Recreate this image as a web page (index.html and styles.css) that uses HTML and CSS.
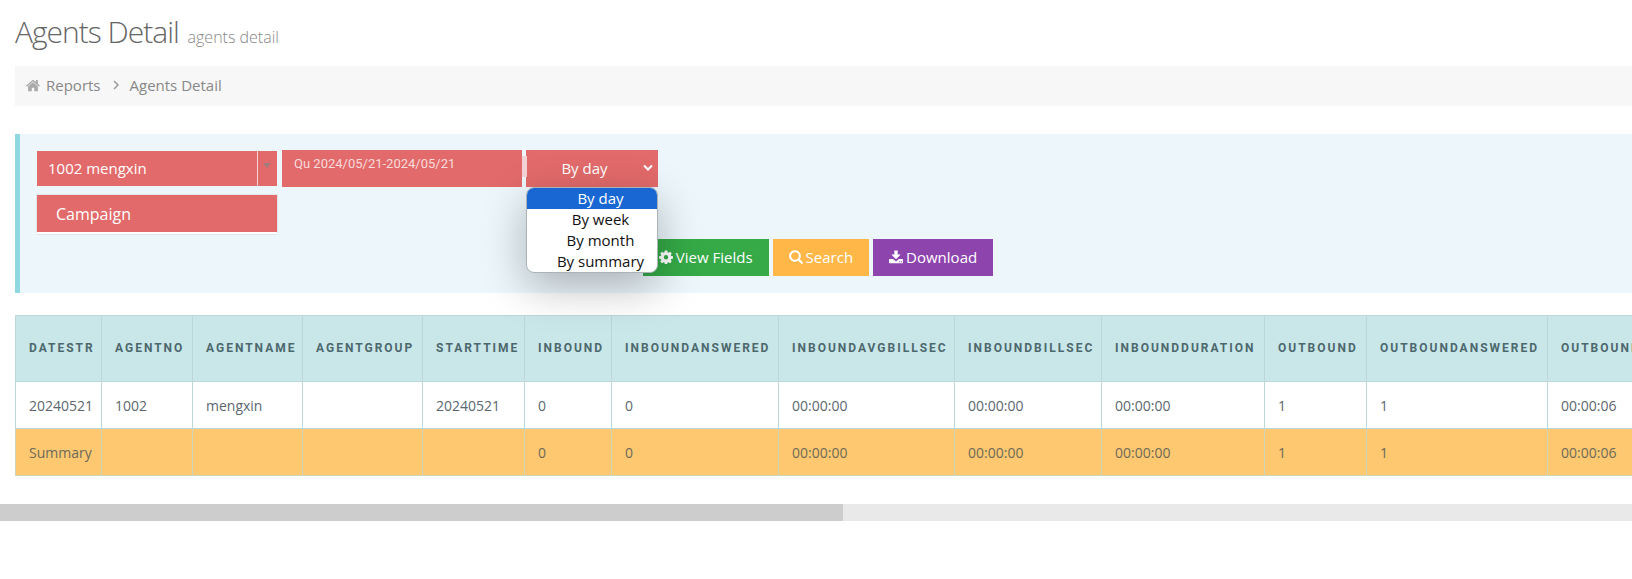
FILE: index.html
```html
<!DOCTYPE html>
<html lang="en">
<head>
<meta charset="utf-8">
<title>Agents Detail</title>
<link rel="stylesheet" href="styles.css">
</head>
<body>
<main class="page">
  <h1 class="page-title">Agents Detail <small>agents detail</small></h1>

  <nav class="breadcrumb" aria-label="Breadcrumb">
    <svg class="home" viewBox="0 0 16 14" aria-hidden="true"><path d="M8 3.2 2.4 7.9V13q0 .6.6.6h3.6V9.7h2.8v3.9H13q.6 0 .6-.6V7.9zM15.8 6.9 13.6 5V.9q0-.3-.3-.3h-1.7q-.3 0-.3.3v2.2L8.8 1Q8 .4 7.2 1L.2 6.900q-.2.2 0 .4l.6.7q.2.200.4 0L8 2.300l6.800 5.700q.2.200.4 0l.6-.7q.2-.2 0-.4z"/></svg>
    <a href="#">Reports</a>
    <svg class="angle" viewBox="0 0 6 10" aria-hidden="true"><path d="M1 1l4 4-4 4"/></svg>
    <a href="#">Agents Detail</a>
  </nav>

  <form class="filters">
    <div class="fields">
      <div class="agent">
        <select aria-label="Agent"><option>1002 mengxin</option></select>
        <span class="arrow"></span>
      </div>
      <div class="dates"><input type="text" aria-label="Date range" value="Qu 2024/05/21-2024/05/21"></div>
      <div class="period">
        <select aria-label="Period"><option>By day</option><option>By week</option><option>By month</option><option>By summary</option></select>
        <svg class="chevron" viewBox="0 0 10 7" aria-hidden="true"><path d="M1 1l4 4 4-4"/></svg>
        <ul class="menu" role="listbox" aria-label="Period options">
          <li role="option" aria-selected="true" class="active">By day</li>
          <li role="option" aria-selected="false">By week</li>
          <li role="option" aria-selected="false">By month</li>
          <li role="option" aria-selected="false">By summary</li>
        </ul>
      </div>
      <button type="button" class="campaign">Campaign</button>
    </div>
    <div class="actions">
      <button type="button" class="btn green"><svg viewBox="0 0 14 14" aria-hidden="true"><path fill-rule="evenodd" d="M5.800.5h2.400l.35 1.800 1 .4 1.500-1 1.700 1.700-1 1.500.4 1 1.800.35v2.400l-1.800.35-.4 1 1 1.500-1.700 1.700-1.500-1-1 .4-.35 1.400H5.800l-.35-1.400-1-.4-1.500 1-1.700-1.700 1-1.500-.4-1L.1 8.650v-2.400l1.750-.35.4-1-1-1.500 1.700-1.700 1.500 1 1-.4zM7 5.100a2.200 2.200 0 1 0 0 4.400 2.200 2.200 0 0 0 0-4.400z"/></svg>View Fields</button>
      <button type="button" class="btn orange"><svg viewBox="0 0 14 14" aria-hidden="true"><path fill-rule="evenodd" d="M6 .2a5.800 5.800 0 1 0 3.200 10.600l3 3q.5.4 1 0l.6-.6q.4-.5 0-1l-3-3A5.800 5.800 0 0 0 6 .2zM6 2.200a3.800 3.800 0 1 1 0 7.600 3.800 3.800 0 0 1 0-7.600z"/></svg>Search</button>
      <button type="button" class="btn purple"><svg viewBox="0 0 14 14" aria-hidden="true"><path fill-rule="evenodd" d="M5.300.5h3.400v4h3L7 9.300 2.300 4.500h3zM.7 9h3.400L7 11.600 9.900 9h3.400q.7 0 .7.700v2.800q0 .7-.7.700H.7q-.7 0-.7-.7V9.700Q0 9 .7 9zM9.900 11.200v1h1v-1zM11.900 11.200v1h1v-1z"/></svg>Download</button>
    </div>
  </form>

  <div class="table-wrap">
    <table>
      <colgroup>
        <col class="w86"><col class="w91"><col class="w110"><col class="w120"><col class="w102"><col class="w87"><col class="w167"><col class="w176"><col class="w147"><col class="w163"><col class="w102"><col class="w181"><col class="w190">
      </colgroup>
      <thead>
        <tr><th>DATESTR</th><th>AGENTNO</th><th>AGENTNAME</th><th>AGENTGROUP</th><th>STARTTIME</th><th>INBOUND</th><th>INBOUNDANSWERED</th><th>INBOUNDAVGBILLSEC</th><th>INBOUNDBILLSEC</th><th>INBOUNDDURATION</th><th>OUTBOUND</th><th>OUTBOUNDANSWERED</th><th>OUTBOUNDAVGBILLSEC</th></tr>
      </thead>
      <tbody>
        <tr><td>20240521</td><td>1002</td><td>mengxin</td><td></td><td>20240521</td><td>0</td><td>0</td><td>00:00:00</td><td>00:00:00</td><td>00:00:00</td><td>1</td><td>1</td><td>00:00:06</td></tr>
        <tr class="summary"><td>Summary</td><td></td><td></td><td></td><td></td><td>0</td><td>0</td><td>00:00:00</td><td>00:00:00</td><td>00:00:00</td><td>1</td><td>1</td><td>00:00:06</td></tr>
      </tbody>
    </table>
  </div>
</main>
<div class="scroll-track"><div class="scroll-thumb"></div></div>
</body>
</html>
```
FILE: styles.css
```css
* { box-sizing: border-box; }
body {
  margin: 0;
  background: #fff;
  color: #5b6770;
  font: 14px/20px "Open Sans", "Noto Sans", sans-serif;
  overflow: hidden;
}
button, input, select { margin: 0; border: 0; border-radius: 0; font: inherit; color: #fff; }
.page { padding: 12px 0 0 15px; }
.page-title {
  margin: 0 0 14px;
  color: #666;
  font-size: 30px;
  line-height: 40px;
  font-weight: 300;
  letter-spacing: -1px;
}
.page-title small { margin-left: 2px; font-size: 16px; line-height: 20px; letter-spacing: 0; color: #888; }

.breadcrumb {
  display: flex;
  align-items: center;
  height: 40px;
  padding: 0 11px 2px;
  background: #f7f7f7;
  font-size: 15px;
}
.breadcrumb a { color: #888; text-decoration: none; }
.home { width: 14px; height: 13px; margin-right: 6px; fill: #aaa; }
.angle { width: 6px; height: 10px; margin: 0 11px 0 12px; fill: none; stroke: #999; stroke-width: 1.5; }

.filters {
  margin-top: 28px;
  padding: 16px 33px 17px 17px;
  border-left: 5px solid #91d9e2;
  background: #ecf6fb;
  font-size: 15px;
}
.fields { display: flex; flex-wrap: wrap; gap: 8px 4px; max-width: 640px; }
.agent, .dates, .period { position: relative; display: flex; height: 37px; }
.agent { width: 241px; padding: 1px 1px 1px 0; }
.agent select { flex: 1; padding: 0 11px 2px; appearance: none; background: #e26a6a; }
.arrow { width: 20px; border-left: 1px solid #f3d5d8; background: #e26a6a; }
.arrow::after {
  content: "";
  display: block;
  margin: 12px 0 0 5px;
  width: 0;
  border: 4px solid transparent;
  border-top: 5px solid #a17c7c;
  border-bottom: 0;
}
.dates { width: 240px; }
.dates input {
  width: 100%;
  padding: 0 12px 9px;
  background: #e26a6a;
  color: #f9dcdc;
  font: 400 13px/20px Roboto, "Liberation Sans", sans-serif;
}
.dates::after {
  content: "";
  position: absolute;
  z-index: 1;
  left: 100%;
  top: 6px;
  width: 5px;
  height: 21px;
  background: #f4d3d6;
}
.period { width: 132px; }
.period select {
  width: 100%;
  padding: 0 15px 2px 0;
  appearance: none;
  background: #e26a6a;
  text-align: center;
  text-align-last: center;
}
.chevron { position: absolute; right: 5px; top: 14px; width: 10px; height: 8px; fill: none; stroke: #fff; stroke-width: 2; }
.menu {
  position: absolute;
  top: 37px;
  left: 0;
  right: 0;
  z-index: 2;
  margin: 0;
  padding: 0;
  overflow: hidden;
  list-style: none;
  background: #fff;
  border: 1px solid #a9b3b8;
  border-radius: 8px;
  box-shadow: 0 14px 44px rgba(0, 0, 0, .28);
  color: #111;
  line-height: 21px;
  text-align: center;
}
.menu li { padding-left: 17px; }
.menu .active { background: #1967d2; color: #fff; }
.campaign {
  width: 240px;
  height: 37px;
  padding: 0 19px;
  background: #e26a6a;
  box-shadow: 0 2px 0 #fff, 0 0 0 1px #dfe5e8, 0 3px 0 #dfe5e8;
  font-size: 16px;
  text-align: left;
}
.actions { display: flex; justify-content: center; gap: 4px; margin-top: 7px; }
.btn { display: flex; align-items: center; gap: 3px; height: 37px; padding: 0 16px 2px; }
.btn svg { width: 14px; height: 14px; fill: #fff; }
.green { background: #35aa47; }
.orange { background: #ffb848; }
.purple { background: #8e44ad; }

.table-wrap { margin-top: 22px; overflow: hidden; }
table { width: 1722px; border-collapse: collapse; table-layout: fixed; }
th, td { padding: 0 0 0 13px; border: 1px solid #bdd6d9; text-align: left; white-space: nowrap; }
th {
  height: 66px;
  padding-bottom: 2px;
  background: #c9e7e9;
  color: #4d686d;
  font: 700 12px/20px Roboto, "Noto Sans", sans-serif;
  letter-spacing: 2px;
}
td { height: 47px; padding-top: 2px; }
.summary td { background: #fec871; color: #6d6a58; border-color: #cdd6bb; }
.w86 { width: 86px; }
.w87 { width: 87px; }
.w91 { width: 91px; }
.w102 { width: 102px; }
.w110 { width: 110px; }
.w120 { width: 120px; }
.w147 { width: 147px; }
.w163 { width: 163px; }
.w167 { width: 167px; }
.w176 { width: 176px; }
.w181 { width: 181px; }
.w190 { width: 190px; }

.scroll-track { margin-top: 28px; height: 17px; background: #e9e9e9; }
.scroll-thumb { width: 51.65%; height: 100%; background: #cdcdcd; }
```
